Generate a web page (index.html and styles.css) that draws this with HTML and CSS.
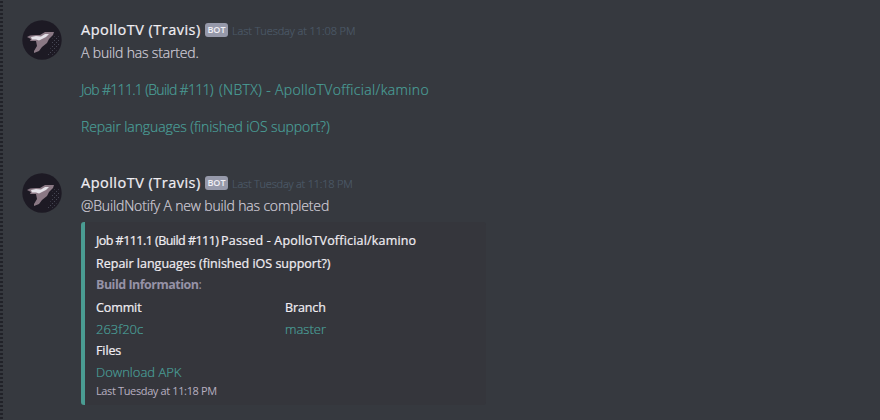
FILE: index.html
```
<!DOCTYPE html>
<html lang="en">
<head>
<meta charset="utf-8">
<title>Build notifications</title>
<link rel="stylesheet" href="styles.css">
</head>
<body>
<svg class="defs" width="0" height="0" aria-hidden="true">
  <defs>
    <pattern id="dots" width="4" height="4" patternUnits="userSpaceOnUse">
      <rect width="1" height="1" fill="#454653"/><rect x="2" y="2" width="1" height="1" fill="#454653"/>
    </pattern>
    <symbol id="bird" viewBox="0 0 40 40">
      <circle cx="20" cy="20" r="19.7" fill="#1d1a24"/>
      <path d="M31 17 L36 15 Q42 25 30 35 L25 37 L29 27 Z" fill="url(#dots)"/>
      <path d="M5 17 L8 15.5 L14 15 L18 15 L23 12 L32 12 L31 15 L27 19 L25 23 L20 27 L17 31 L12 33 L12 31 L15 26 L14 21 L8 21 L9 19 Z" fill="#8a7884"/>
      <path d="M9 17 L14 16 L19 16.5 L23 14 L27 14 L24 17 L20 19 L17 20.5 L14 19.5 L10 19.5 Z" fill="#e4e1e8"/>
    </symbol>
  </defs>
</svg>
<main class="chat">
  <article class="message first">
    <svg class="avatar"><use href="#bird"/></svg>
    <div class="content">
      <header class="heading"><span class="name">ApolloTV (Travis)</span><span class="bot">BOT</span><time class="time">Last Tuesday at 11:08 PM</time></header>
      <p class="text">A build has started.</p>
      <p class="text"><a class="link job"><span class="number">Job #111.1 (Build #111)&nbsp; </span>(NBTX) - ApolloTVofficial/kamino</a></p>
      <p class="text"><a class="link">Repair languages (finished iOS support?)</a></p>
    </div>
  </article>
  <article class="message">
    <svg class="avatar"><use href="#bird"/></svg>
    <div class="content">
      <header class="heading"><span class="name">ApolloTV (Travis)</span><span class="bot">BOT</span><time class="time later">Last Tuesday at 11:18 PM</time></header>
      <p class="text">@BuildNotify A new build has completed</p>
      <section class="embed">
        <h2 class="title"><span class="number">Job #111.1 (Build #111) </span>Passed - ApolloTVofficial/kamino</h2>
        <h3 class="subtitle">Repair languages (finished iOS support?)</h3>
        <p class="info"><b>Build Information</b>:</p>
        <div class="fields">
          <div class="field"><div class="label">Commit</div><a class="value">263f20c</a></div>
          <div class="field"><div class="label">Branch</div><a class="value">master</a></div>
          <div class="field"><div class="label">Files</div><a class="value">Download APK</a></div>
        </div>
        <footer class="footer">Last Tuesday at 11:18 PM</footer>
      </section>
    </div>
  </article>
</main>
</body>
</html>
```
FILE: styles.css
```
* { box-sizing: border-box; }
body { margin: 0; background: #36393f; font-family: "Open Sans", "Noto Sans", sans-serif; }
.defs { position: absolute; }
.chat {
  height: 420px;
  overflow: hidden;
  padding: 20px 0 0 22px;
  background: radial-gradient(circle at 1.5px 2px, #202127 1.1px, transparent 1.4px) 0 0 / 4px 4px repeat-y;
  white-space: nowrap;
}
.message { display: flex; gap: 19px; }
.first { height: 153px; }
.avatar { width: 40px; height: 40px; flex: none; }
.content { flex: none; }
.heading { display: flex; align-items: center; height: 20px; }
.name { width: 124px; font-size: 14.5px; line-height: 18px; padding-bottom: 1px; font-weight: 400; letter-spacing: .48px; color: #f0eef3; -webkit-text-stroke: .22px; }
.bot { width: 23px; height: 14px; border-radius: 3px; background: #9699aa; color: #f1eff5; font-size: 9px; line-height: 14px; text-align: center; font-weight: 600; }
.time { margin: 1px 0 0 4px; font-size: 11px; font-weight: 300; letter-spacing: -.1px; color: #4c5968; -webkit-text-stroke: .2px; }
.later { letter-spacing: -.22px; }
p, h2, h3 { margin: 0; }
.text { height: 24px; line-height: 26px; font-size: 14px; font-weight: 300; letter-spacing: -.16px; color: #d2ced9; -webkit-text-stroke: .2px; }
.first .text { margin-bottom: 13px; }
.link { letter-spacing: -.1px; }
.job { letter-spacing: .34px; }
.job .number { letter-spacing: -.68px; }
.link, .value { color: #4a9f98; }
.embed { width: 405px; height: 183px; margin-top: 5px; padding: 8px 0 0 11px; border-left: 4px solid #4a9c92; border-radius: 3px; background: #35363c; }
.title, .subtitle, .label { font-size: 12.5px; font-weight: 400; color: #f0edf2; -webkit-text-stroke: .22px; }
.label { letter-spacing: -.11px; }
.title { line-height: 22px; letter-spacing: .19px; }
.title .number { letter-spacing: -.54px; }
.subtitle { line-height: 23px; }
.info { line-height: 19px; font-size: 12.5px; letter-spacing: -.5px; color: #9692a6; }
.fields { display: grid; grid-template-columns: 189px 189px; grid-auto-rows: 43px; margin-top: 3px; }
.label, .value { display: block; line-height: 21.5px; }
.value { font-size: 13px; font-weight: 300; -webkit-text-stroke: .2px; }
.footer { line-height: 16px; font-size: 11px; letter-spacing: -.37px; color: #b7afc0; }
```
